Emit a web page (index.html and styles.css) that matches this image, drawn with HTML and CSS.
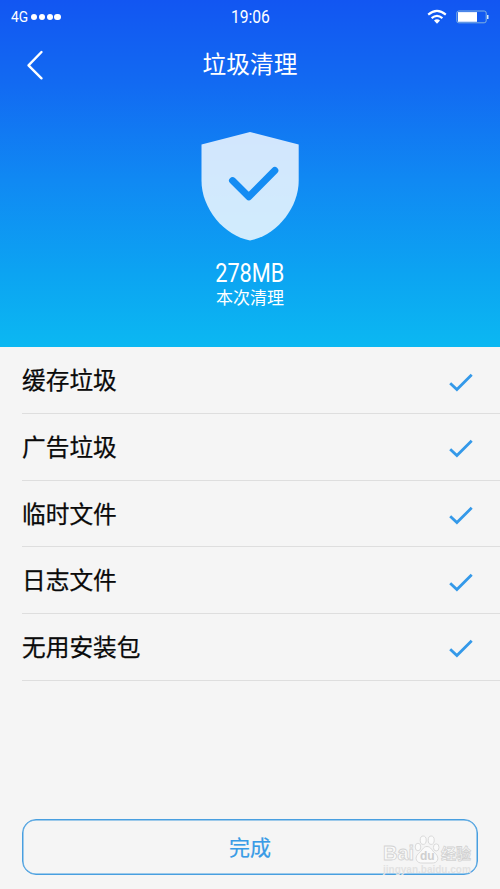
FILE: index.html
```html
<!DOCTYPE html>
<html lang="zh-CN">
<head>
<meta charset="utf-8">
<title>垃圾清理</title>
<link rel="stylesheet" href="styles.css">
</head>
<body>
<svg class="defs" width="0" height="0"><symbol id="check" viewBox="0 0 26 20"><path d="M2.2 10.2 8.9 16.6 23.7 1.8" fill="none" stroke="currentColor" stroke-width="2.8"/></symbol></svg>
<main class="screen">
  <header class="hero">
    <div class="status">
      <div class="signal"><span class="network">4G</span><i class="dot"></i><i class="dot"></i><i class="dot"></i><i class="dot"></i></div>
      <div class="clock">19:06</div>
      <div class="indicators">
        <svg width="20" height="16" viewBox="0 0 20 16"><g fill="none" stroke="#fff" stroke-width="2.1"><path d="M1.2 5.6Q10-2 18.8 5.6"/><path d="M4.6 9.1Q10 4.5 15.4 9.1"/></g><path d="M7 11.5Q10 9.2 13 11.5L10 14.8Z" fill="#fff"/></svg>
        <svg width="33" height="14" viewBox="0 0 33 14"><rect x=".8" y="1" width="29.4" height="11.8" rx="2" fill="none" stroke="#82b3df" stroke-width="1"/><path d="M2 2.1H21V11.8H2Z" fill="#fff"/><path d="M31 5h1.5v4H31z" fill="#d7eafa"/></svg>
      </div>
    </div>
    <nav class="titlebar">
      <svg class="back" width="18" height="30" viewBox="0 0 18 30"><path d="M15.5 2 2.5 15.4 15.5 28.3" fill="none" stroke="#fff" stroke-width="2.4" stroke-linecap="round" stroke-linejoin="round"/></svg>
      <h1>垃圾清理</h1>
    </nav>
    <svg class="shield" width="98" height="109" viewBox="0 0 98 109"><path d="M49 0 97.7 12.5V49C97.7 76 75 104 49 108.4C23 104 .5 76 .5 49V12.5Z" fill="#fff" fill-opacity=".81"/><path d="M31.5 48.6 47.8 64.7 73.8 38.5" fill="none" stroke="#148cf3" stroke-width="7" stroke-linecap="round" stroke-linejoin="round"/></svg>
    <div class="amount">278MB</div>
    <div class="caption">本次清理</div>
  </header>
  <ul class="list">
    <li><span>缓存垃圾</span><svg class="check"><use href="#check"/></svg></li>
    <li><span>广告垃圾</span><svg class="check"><use href="#check"/></svg></li>
    <li><span>临时文件</span><svg class="check"><use href="#check"/></svg></li>
    <li><span>日志文件</span><svg class="check"><use href="#check"/></svg></li>
    <li><span>无用安装包</span><svg class="check"><use href="#check"/></svg></li>
  </ul>
  <button class="done">完成</button>
  <div class="watermark">
    <div class="brand"><span class="bai">Bai</span><svg width="26" height="29" viewBox="0 0 26 29"><g fill="#fafafa" stroke="#d6d6d6" stroke-width=".9"><ellipse cx="4" cy="12" rx="2.8" ry="3.8"/><ellipse cx="9.2" cy="5.2" rx="3" ry="4.2"/><ellipse cx="17.2" cy="5.2" rx="3" ry="4.2"/><ellipse cx="22.2" cy="12.4" rx="2.8" ry="3.6"/><path d="M13 11.5C9 11.5 8 16 4.5 18.5C-.5 23 3 28.5 8 28H18C23.5 28.5 26 23 21.5 18.5C18 16 17 11.5 13 11.5Z"/></g><text class="paw" x="6" y="25">du</text></svg><span class="jingyan">经验</span></div>
    <div class="url">jingyan.baidu.com</div>
  </div>
</main>
</body>
</html>
```

FILE: styles.css
```css
* { box-sizing: border-box; }
body { margin: 0; background: #f5f5f5; font-family: Roboto, "Noto Sans CJK SC", sans-serif; }
.defs { position: absolute; }
.screen { position: relative; width: 500px; height: 889px; overflow: hidden; display: flex; flex-direction: column; background: #f5f5f5; }
.hero { height: 347px; flex: none; display: flex; flex-direction: column; align-items: center; color: #fff; background: linear-gradient(#1256f2 0%, #126af2 24%, #1089f3 52%, #0ca3f2 78%, #0bb8f2 100%); }
.status { width: 100%; height: 34px; padding: 0 11px; display: grid; grid-template-columns: 1fr auto 1fr; align-items: center; }
.signal { display: flex; align-items: center; gap: 1.6px; }
.network { font-size: 14.5px; width: 18.5px; transform: scaleX(.95); transform-origin: left; }
.dot { width: 6.2px; height: 6.2px; border-radius: 50%; background: #fff; }
.clock { font-size: 18px; line-height: 34px; transform: scaleX(.87); }
.indicators { display: flex; align-items: center; justify-content: flex-end; gap: 9px; }
.titlebar { width: 100%; height: 62px; padding: 0 26px; display: grid; grid-template-columns: 1fr auto 1fr; align-items: center; }
h1 { margin: 0; font-size: 23.7px; line-height: 34px; font-weight: 400; }
.shield { margin-top: 36px; flex: none; }
.amount { margin-top: 18px; font-size: 25px; line-height: 30px; transform: scaleX(.87); }
.caption { font-size: 17px; line-height: 18px; }
.list { margin: 0; padding: .5px 0 0 22px; list-style: none; }
.list li { height: 66.67px; padding: 0 26px 2px 0; display: flex; align-items: center; justify-content: space-between; border-bottom: 1px solid #dedede; color: #0a0a0a; font-size: 23.7px; font-weight: 400; -webkit-text-stroke: .25px #0a0a0a; }
.check { width: 26px; height: 20px; color: #3499e9; margin-top: 7px; }
.done { margin: auto 22px 14px; height: 56px; padding: 0 0 3px; border: 1.5px solid #489fe0; border-radius: 14px; background: transparent; color: #389be6; font: 400 21px "Noto Sans CJK SC", sans-serif; -webkit-text-stroke: .2px #389be6; box-shadow: inset 0 0 0 .5px #489fe0; }
.watermark { position: absolute; left: 383px; top: 835px; width: 95px; color: #fafafa; }
.brand { display: flex; align-items: flex-end; height: 29px; font: 700 20px/22px "Liberation Sans", sans-serif; -webkit-text-stroke: .8px #d2d2d2; }
.bai { width: 31px; }
.jingyan { font: 700 15px/22px "Noto Sans CJK SC", sans-serif; margin-left: 1px; }
.paw { font: 700 12px "Liberation Sans", sans-serif; fill: #cfcfcf; stroke: none; -webkit-text-stroke: 0; }
.url { font: 700 10px/12px "Liberation Sans", sans-serif; color: #e2e2e2; }
```
